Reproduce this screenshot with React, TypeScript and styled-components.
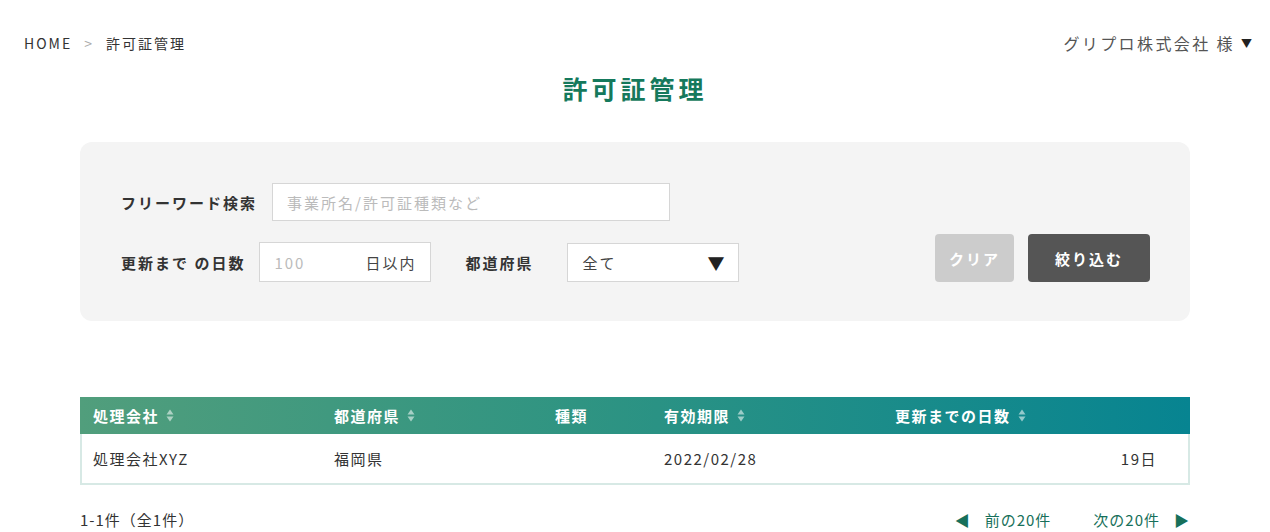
import React from "react";
import styled, { createGlobalStyle } from "styled-components";

const GlobalStyle = createGlobalStyle`
  body {
    margin: 0;
    background: #fff;
    font-family: "Noto Sans CJK JP", "Noto Sans", sans-serif;
    color: #333;
  }
  * { box-sizing: border-box; }
`;

const Page = styled.div`
  width: 1270px;
  height: 532px;
  overflow: hidden;
`;

const TopBar = styled.header`
  display: flex;
  justify-content: space-between;
  align-items: center;
  padding: 31px 18px 0 24px;
  height: 54px;
`;

const Breadcrumb = styled.nav`
  display: flex;
  align-items: center;
  gap: 12px;
  font-size: 14px;
  letter-spacing: 2px;
  color: #333;
`;

const Crumb = styled.span<{ $muted?: boolean }>`
  color: ${(p) => (p.$muted ? "#aaa" : "#333")};
`;

const UserMenu = styled.div`
  display: flex;
  align-items: center;
  gap: 6px;
  font-size: 16px;
  letter-spacing: 2.4px;
  color: #555;
`;

const Caret = styled.span`
  font-size: 11px;
  color: #222;
  letter-spacing: 0;
`;

const Title = styled.h1`
  margin: 14px 0 0;
  text-align: center;
  font-size: 25px;
  font-weight: 700;
  letter-spacing: 4px;
  color: #15795c;
  line-height: 40px;
`;

const Main = styled.main`
  width: 1110px;
  margin: 0 auto;
`;

const FilterPanel = styled.section`
  margin-top: 34px;
  background: #f4f4f4;
  border-radius: 12px;
  padding: 41px 40px 39px 41px;
  display: flex;
  justify-content: space-between;
  align-items: flex-end;
`;

const Fields = styled.div`
  display: flex;
  flex-direction: column;
  gap: 21px;
`;

const FieldRow = styled.div`
  display: flex;
  align-items: center;
`;

const Label = styled.label<{ $gap: number; $lead?: number }>`
  font-size: 15px;
  font-weight: 700;
  letter-spacing: 2px;
  color: #333;
  margin-left: ${(p) => p.$lead ?? 0}px;
  margin-right: ${(p) => p.$gap}px;
  white-space: pre;
`;

const Box = styled.div<{ $w: number; $h: number }>`
  width: ${(p) => p.$w}px;
  height: ${(p) => p.$h}px;
  background: #fff;
  border: 1px solid #d6d6d6;
  display: flex;
  align-items: center;
  justify-content: space-between;
  padding: 0 14px;
  font-size: 15px;
  letter-spacing: 2px;
`;

const Placeholder = styled.span`
  color: #bbb;
`;

const Suffix = styled.span`
  color: #444;
`;

const SelectText = styled.span`
  color: #444;
`;

const SelectArrow = styled.span`
  font-size: 17px;
  color: #222;
  letter-spacing: 0;
`;

const Buttons = styled.div`
  display: flex;
  gap: 14px;
`;

const Button = styled.button<{ $variant: "clear" | "apply"; $w: number }>`
  width: ${(p) => p.$w}px;
  height: 48px;
  border: none;
  border-radius: 4px;
  background: ${(p) => (p.$variant === "clear" ? "#cccccc" : "#555555")};
  color: #fff;
  font-family: inherit;
  font-size: 15px;
  font-weight: 700;
  letter-spacing: 2px;
`;

const Table = styled.div`
  margin-top: 76px;
`;

const Row = styled.div<{ $head?: boolean }>`
  display: grid;
  grid-template-columns: 241px 221px 109px 231px 1fr;
  align-items: center;
  ${(p) =>
    p.$head
      ? `
    height: 37px;
    background: linear-gradient(90deg, #519e7c 0%, #2f9482 45%, #078491 100%);
    color: #fff;
    font-weight: 700;
  `
      : `
    height: 51px;
    border: 2px solid #d7e9e5;
    border-top: none;
    color: #333;
  `}
`;

const Cell = styled.div<{ $right?: boolean }>`
  display: flex;
  align-items: center;
  gap: 7px;
  font-size: 15px;
  letter-spacing: 1.5px;
  padding-left: 13px;
  padding-right: ${(p) => (p.$right ? "31px" : "0")};
  justify-content: ${(p) => (p.$right ? "flex-end" : "flex-start")};
`;

const BodyCell = styled(Cell)`
  padding-left: 11px;
`;

const SortIcon = () => (
  <svg width="8" height="13" viewBox="0 0 8 13" aria-hidden>
    <path d="M4 0.5 L7.5 5.5 L0.5 5.5 Z" fill="rgba(255,255,255,0.55)" />
    <path d="M4 12.5 L7.5 7.5 L0.5 7.5 Z" fill="rgba(255,255,255,0.55)" />
  </svg>
);

const Footer = styled.div`
  display: flex;
  justify-content: space-between;
  align-items: center;
  margin-top: 24px;
  font-size: 15px;
  letter-spacing: 1px;
`;

const Count = styled.span`
  color: #333;
`;

const Pager = styled.div`
  display: flex;
  gap: 42px;
  color: #17705a;
`;

const PagerLink = styled.a`
  display: flex;
  align-items: center;
  gap: 14px;
  color: inherit;
  text-decoration: none;
`;

const Arrow = styled.span`
  font-size: 15px;
`;

const columns = [
  { label: "処理会社", sort: true },
  { label: "都道府県", sort: true },
  { label: "種類", sort: false },
  { label: "有効期限", sort: true },
  { label: "更新までの日数", sort: true },
];

const rows = [
  { company: "処理会社XYZ", pref: "福岡県", kind: "", expires: "2022/02/28", days: "19日" },
];

export default function App() {
  return (
    <Page>
      <GlobalStyle />
      <TopBar>
        <Breadcrumb>
          <Crumb>HOME</Crumb>
          <Crumb $muted>&gt;</Crumb>
          <Crumb>許可証管理</Crumb>
        </Breadcrumb>
        <UserMenu>
          グリプロ株式会社 様<Caret>▼</Caret>
        </UserMenu>
      </TopBar>
      <Title>許可証管理</Title>
      <Main>
        <FilterPanel>
          <Fields>
            <FieldRow>
              <Label $gap={15}>フリーワード検索</Label>
              <Box $w={398} $h={38}>
                <Placeholder>事業所名/許可証種類など</Placeholder>
              </Box>
            </FieldRow>
            <FieldRow>
              <Label $gap={14}>更新まで の日数</Label>
              <Box $w={172} $h={40}>
                <Placeholder>100</Placeholder>
                <Suffix>日以内</Suffix>
              </Box>
              <Label $gap={34} $lead={34}>
                都道府県
              </Label>
              <Box $w={172} $h={39}>
                <SelectText>全て</SelectText>
                <SelectArrow>▼</SelectArrow>
              </Box>
            </FieldRow>
          </Fields>
          <Buttons>
            <Button $variant="clear" $w={79}>クリア</Button>
            <Button $variant="apply" $w={122}>絞り込む</Button>
          </Buttons>
        </FilterPanel>

        <Table>
          <Row $head>
            {columns.map((c) => (
              <Cell key={c.label}>
                {c.label}
                {c.sort && <SortIcon />}
              </Cell>
            ))}
          </Row>
          {rows.map((r) => (
            <Row key={r.company}>
              <BodyCell>{r.company}</BodyCell>
              <BodyCell>{r.pref}</BodyCell>
              <BodyCell>{r.kind}</BodyCell>
              <BodyCell>{r.expires}</BodyCell>
              <BodyCell $right>{r.days}</BodyCell>
            </Row>
          ))}
        </Table>

        <Footer>
          <Count>1-1件（全1件）</Count>
          <Pager>
            <PagerLink href="#">
              <Arrow>◀</Arrow>前の20件
            </PagerLink>
            <PagerLink href="#">
              次の20件<Arrow>▶</Arrow>
            </PagerLink>
          </Pager>
        </Footer>
      </Main>
    </Page>
  );
}
